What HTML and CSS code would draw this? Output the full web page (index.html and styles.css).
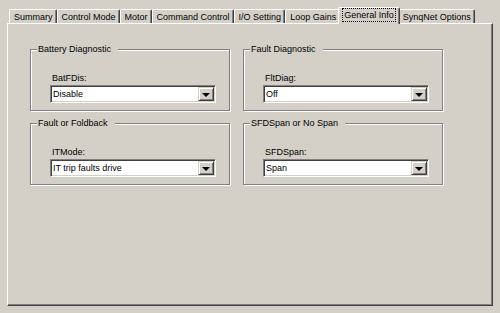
FILE: index.html
```html
<!DOCTYPE html>
<html lang="en">

<head>
    <meta charset="UTF-8">
    <title>General Info</title>
    <link rel="stylesheet" href="styles.css">
</head>

<body>
    <div id="tabs">
        <div class="tab">Summary</div>
        <div class="tab">Control Mode</div>
        <div class="tab">Motor</div>
        <div class="tab">Command Control</div>
        <div class="tab">I/O Setting</div>
        <div class="tab">Loop Gains</div>
        <div class="tab active"><span class="focus">General Info</span></div>
        <div class="tab">SynqNet Options</div>
    </div>

    <div id="page">
        <fieldset class="group">
            <legend>Battery Diagnostic</legend>
            <label>BatFDis:</label>
            <div class="combo"><span class="value">Disable</span><span class="drop"></span></div>
        </fieldset>

        <fieldset class="group">
            <legend>Fault Diagnostic</legend>
            <label>FltDiag:</label>
            <div class="combo"><span class="value">Off</span><span class="drop"></span></div>
        </fieldset>

        <fieldset class="group">
            <legend>Fault or Foldback</legend>
            <label>ITMode:</label>
            <div class="combo"><span class="value">IT trip faults drive</span><span class="drop"></span></div>
        </fieldset>

        <fieldset class="group">
            <legend>SFDSpan or No Span</legend>
            <label>SFDSpan:</label>
            <div class="combo"><span class="value">Span</span><span class="drop"></span></div>
        </fieldset>
    </div>
</body>

</html>
```

FILE: styles.css
```css
body {
    margin: 0;
    background: #d4d0c8;
    font-family: "Liberation Sans", Arial, sans-serif;
    font-size: 9px;
    color: #000;
}

#tabs {
    display: flex;
    align-items: flex-start;
    height: 17px;
    padding: 7px 0 0 9px;
    margin-bottom: -1px;
}

.tab {
    height: 14px;
    margin-top: 2px;
    padding: 0 3px 0 4px;
    line-height: 14px;
    border-top: 1px solid #fff;
    border-left: 1px solid #fff;
    border-right: 1px solid #404040;
    border-radius: 2px 2px 0 0;
    box-shadow: inset -1px 0 #808080;
    box-sizing: border-box;
    background: #d4d0c8;
    white-space: nowrap;
}

.tab.active {
    position: relative;
    z-index: 1;
    height: 17px;
    margin: 0 -2px;
    padding: 1px 4px 0 4px;
    line-height: 12px;
}

.focus {
    display: inline-block;
    outline: 1px dotted #000;
    outline-offset: 0;
    padding: 0 1px;
}

#page {
    display: grid;
    grid-template-columns: 200px 200px;
    column-gap: 13px;
    row-gap: 6px;
    align-content: start;
    width: 486px;
    height: 283px;
    margin-left: 7px;
    padding: 19px 0 0 22px;
    box-sizing: border-box;
    border-top: 1px solid #fff;
    border-left: 1px solid #fff;
    border-right: 1px solid #404040;
    border-bottom: 1px solid #404040;
    box-shadow: inset -1px -1px #808080;
}

.group {
    margin: 0;
    min-width: 0;
    padding: 17px 13px 7px 19px;
    border: 1px solid #808080;
    box-shadow: 1px 1px 0 #fff, inset 1px 1px 0 #fff;
}

.group legend {
    margin-left: -13px;
    padding: 0 7px 0 1px;
    line-height: 12px;
    background: #d4d0c8;
}

.group label {
    display: block;
    margin: 0 0 1px 2px;
    line-height: 12px;
}

.combo {
    display: flex;
    align-items: stretch;
    height: 18px;
    box-sizing: border-box;
    padding: 1px;
    background: #fff;
    border: 1px solid;
    border-color: #808080 #fff #fff #808080;
    box-shadow: inset 1px 1px #404040, inset -1px -1px #d4d0c8;
}

.value {
    flex: 1;
    padding-left: 1px;
    line-height: 14px;
}

.drop {
    display: flex;
    align-items: center;
    justify-content: center;
    width: 16px;
    box-sizing: border-box;
    background: #d4d0c8;
    border: 1px solid;
    border-color: #d4d0c8 #404040 #404040 #d4d0c8;
    box-shadow: inset 1px 1px #fff, inset -1px -1px #808080;
}

.drop::after {
    content: "";
    border-top: 4px solid #000;
    border-left: 4px solid transparent;
    border-right: 4px solid transparent;
    margin-top: 1px;
}
```
